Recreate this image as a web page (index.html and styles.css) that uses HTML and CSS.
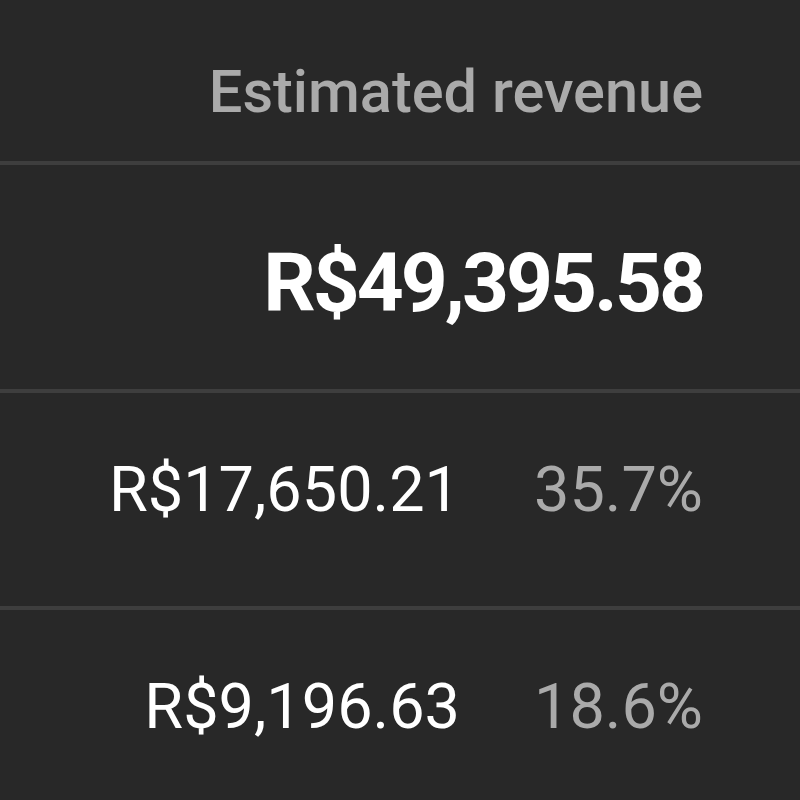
FILE: index.html
```html
<!DOCTYPE html>
<html lang="en">
<head>
<meta charset="utf-8">
<title>Estimated revenue</title>
<link rel="stylesheet" href="styles.css">
</head>
<body>
<div class="table">
  <div class="row head-row"><div class="head">Estimated revenue</div></div>
  <div class="row total-row"><div class="total">R$49,395.58</div></div>
  <div class="row data-row"><div class="value">R$17,650.21</div><div class="pct">35.7%</div></div>
  <div class="row data-row last"><div class="value">R$9,196.63</div><div class="pct">18.6%</div></div>
</div>
</body>
</html>
```

FILE: styles.css
```css
html, body {
  margin: 0;
  padding: 0;
  background: #282828;
  height: 100%;
  overflow: hidden;
}
.table {
  font-family: Roboto, "Liberation Sans", sans-serif;
  width: 800px;
}
.row {
  display: flex;
  justify-content: flex-end;
  align-items: baseline;
  padding-right: 97px;
  border-bottom: 4px solid #3e3e3e;
  box-sizing: border-box;
}
.row.last { border-bottom: none; }
.head-row {
  height: 165px;
  padding-top: 57px;
}
.head {
  font-size: 59.5px;
  line-height: 70px;
  font-weight: 500;
  color: #aaaaaa;
}
.total-row {
  height: 228px;
  padding-top: 71px;
}
.total {
  font-size: 82px;
  line-height: 94px;
  font-weight: 700;
  letter-spacing: -3px;
  color: #ffffff;
}
.data-row {
  height: 217px;
  padding-top: 62px;
}
.value, .pct {
  font-size: 63px;
  line-height: 70px;
  font-weight: 400;
}
.value { color: #ffffff; }
.pct {
  color: #aaaaaa;
  width: 172px;
  margin-left: 71px;
  text-align: right;
}
```
